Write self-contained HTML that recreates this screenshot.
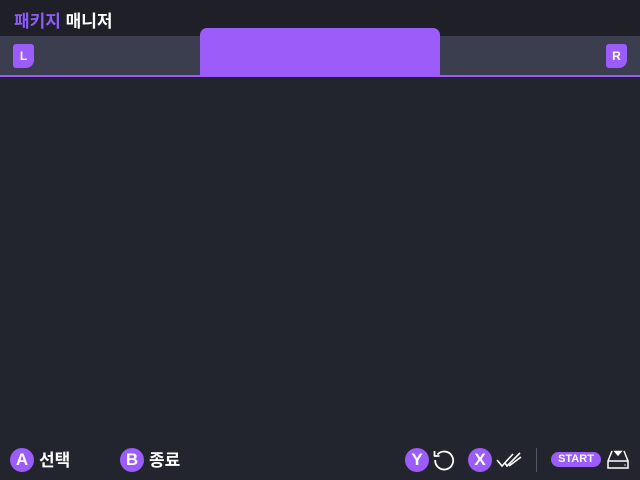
<!DOCTYPE html>
<html><head><meta charset="utf-8"><style>
*{margin:0;padding:0;box-sizing:border-box}
body{width:640px;height:480px;background:#23252e;position:relative;overflow:hidden;font-family:"Liberation Sans","Noto Sans CJK KR",sans-serif;font-weight:bold}
.top{position:absolute;left:0;top:0;width:640px;height:36px;background:#1e1f27}
.title{position:absolute;left:14px;top:7px;font-size:17px;color:#fff;letter-spacing:0}
.title span{color:#8b5cf6}
.tabs{position:absolute;left:0;top:36px;width:640px;height:39px;background:#3b3e4f}
.line{position:absolute;left:0;top:75px;width:640px;height:2px;background:#9b5cfa}
.tab{position:absolute;left:200px;top:28px;width:240px;height:48px;background:#9b5cfa;border-radius:7px 7px 0 0}
.sh{position:absolute;top:44px;width:21px;height:24px;background:#9b5cfa;border-radius:3px 3px 8px 3px;color:#fff;font-size:12px;text-align:center;line-height:24px}
.btn{position:absolute;top:448px;width:24px;height:24px;border-radius:50%;background:#9b5cfa;color:#fff;font-size:17px;text-align:center;line-height:24px}
.lbl{position:absolute;top:450px;color:#fff;font-size:17px;line-height:22px}
</style></head><body>
<div class="top"></div>
<div class="title"><span>패키지</span> 매니저</div>
<div class="tabs"></div>
<div class="line"></div>
<div class="tab"></div>
<div class="sh" style="left:13px">L</div>
<div class="sh" style="left:606px">R</div>
<div class="btn" style="left:10px">A</div><div class="lbl" style="left:39px">선택</div>
<div class="btn" style="left:120px">B</div><div class="lbl" style="left:149px">종료</div>
<div class="btn" style="left:405px">Y</div>
<svg style="position:absolute;left:432px;top:448px" width="24" height="24" viewBox="0 0 24 24" fill="none" stroke="#fff" stroke-width="1.8"><path d="M5.5 6.5 A9 9 0 1 1 3.2 12"/><path d="M2.5 3 L2.5 8 L7.5 8" stroke-linejoin="round"/></svg>
<div class="btn" style="left:468px">X</div>
<svg style="position:absolute;left:496px;top:449px" width="26" height="20" viewBox="0 0 26 20" fill="none" stroke="#fff" stroke-width="1.6"><path d="M1 11 L6 17 L17 5"/><path d="M9 14 L11 17 L24 4"/><path d="M13 17 L25 8"/></svg>
<div style="position:absolute;left:536px;top:448px;width:1px;height:24px;background:#555866"></div>
<div style="position:absolute;left:551px;top:452px;width:50px;height:15px;border-radius:8px;background:#9b5cfa;color:#fff;font-size:11px;line-height:15px;text-align:center">START</div>
<svg style="position:absolute;left:606px;top:448px" width="24" height="24" viewBox="0 0 24 24" fill="none" stroke="#fff" stroke-width="1.5"><path d="M6 3 L2 13 L2 20 L22 20 L22 13 L18 3"/><path d="M2 13 L22 13"/><path d="M9 3.5 L15 3.5 L12 7 Z" fill="#fff"/><path d="M18.5 17 L19.5 17"/></svg>
</body></html>
